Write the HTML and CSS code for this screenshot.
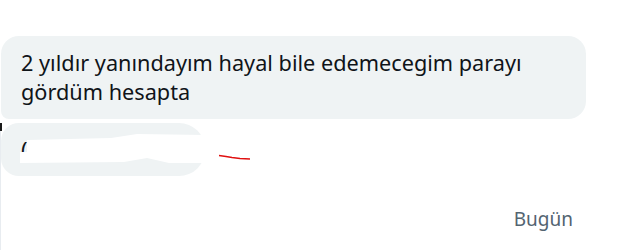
FILE: index.html
```html
<!DOCTYPE html>
<html lang="tr">
<head>
<meta charset="utf-8">
<link rel="stylesheet" href="styles.css">
</head>
<body>
<div class="chat">
  <div class="bubble bubble-main">2 yıldır yanındayım hayal bile edemecegim parayı<br>gördüm hesapta</div>
  <div class="lower">
    <div class="row">
      <div class="bubble bubble-small">
        <span class="txt">(</span>
        <svg class="redact" width="190" height="36" viewBox="0 0 190 36"><path d="M1 20 L8 20 L8 8 L92 6 L118 2 L186 3 L187 31 L150 31 L128 26 L105 30 L1 31 Z" fill="#ffffff"/></svg>
      </div>
      <svg class="scribble" width="34" height="8" viewBox="0 0 34 8"><path d="M1 1.5 L8 2.5 L14 3.5 L22 4.5 L32 5" stroke="#e01010" stroke-width="1.4" fill="none"/></svg>
    </div>
    <div class="time">Bugün</div>
  </div>
</div>
</body>
</html>
```
FILE: styles.css
```css
html, body { margin: 0; padding: 0; background: #ffffff; }
body { width: 642px; height: 250px; overflow: hidden; font-family: "Segoe UI", "Noto Sans", "Open Sans", sans-serif; }
.chat { padding-top: 36px; }
.bubble { background: #eff3f4; color: #0f1419; font-size: 21.7px; line-height: 29px; border-radius: 18px; box-sizing: border-box; }
.bubble-main { margin-left: 1px; width: 585px; height: 83px; padding: 12px 20px; border-bottom-left-radius: 8px; }
.lower { margin-top: 4px; border-left: 1px solid #e8ecf0; position: relative; height: 127px; }
.lower::before { content: ""; position: absolute; left: -1px; top: 0; width: 2px; height: 8px; background: #1a1a1a; }
.row { display: flex; align-items: flex-start; }
.bubble-small { position: relative; width: 204px; height: 53px; padding: 12px 20px; border-radius: 18px 26px 26px 18px; }
.txt { position: relative; }
.redact { position: absolute; left: 18px; top: 9px; }
.scribble { margin-top: 31px; margin-left: 13px; }
.time { margin-top: 31px; width: 572px; text-align: right; font-size: 19px; color: #536471; line-height: 24px; }
```
